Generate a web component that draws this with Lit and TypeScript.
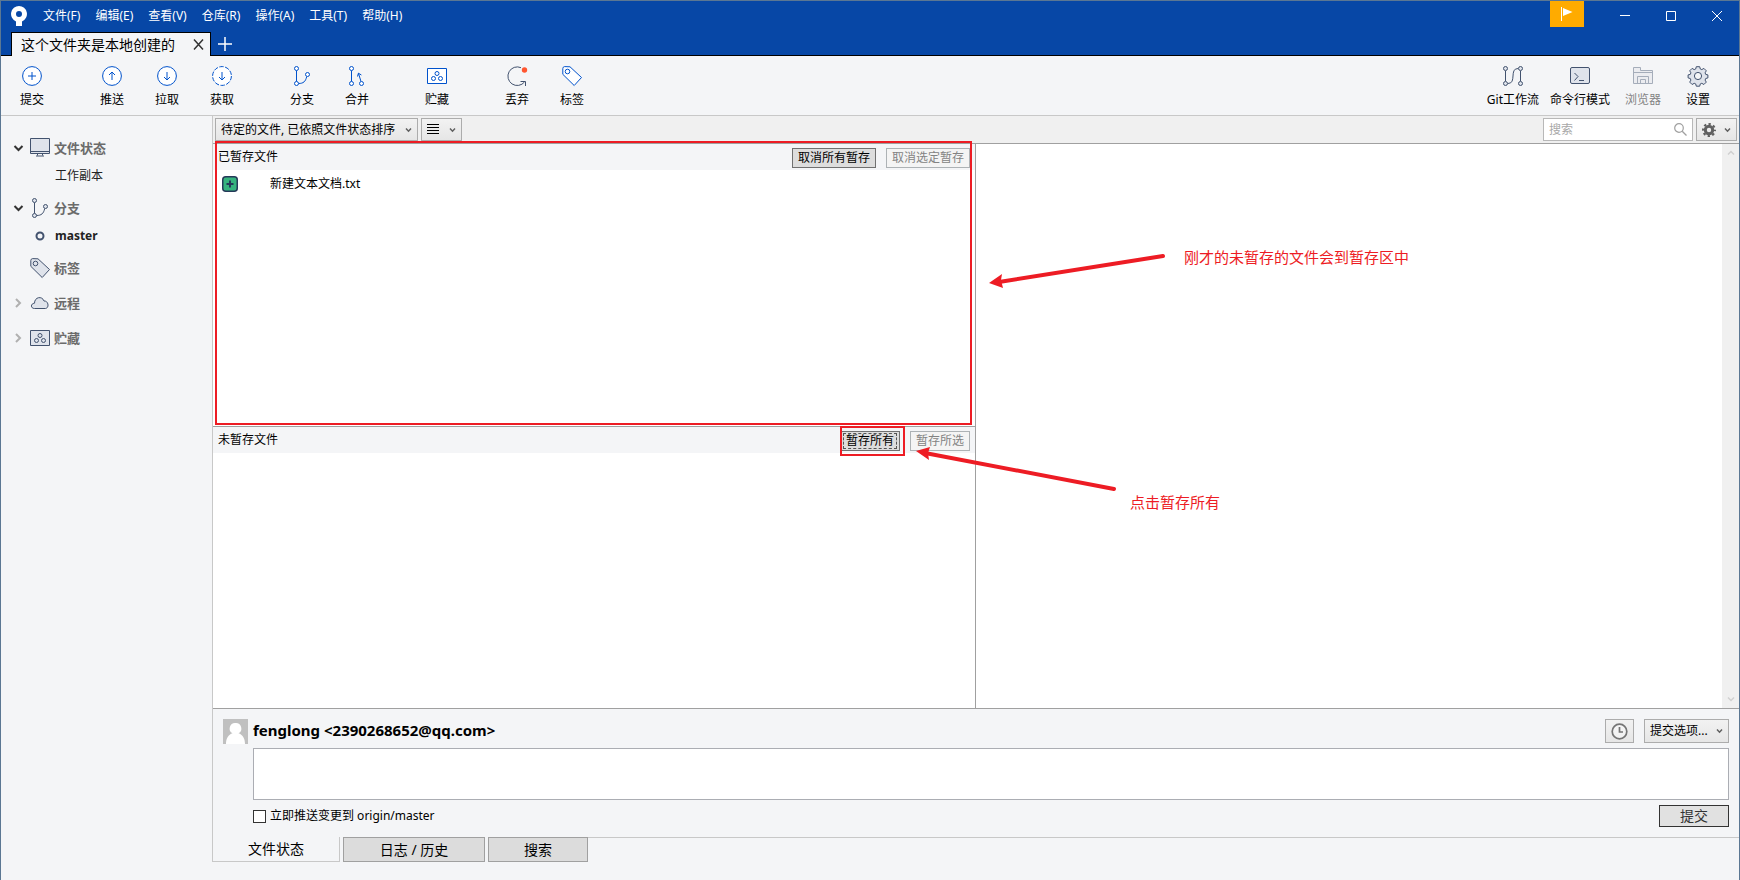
import { LitElement, html, css, svg, nothing } from "lit";
import { customElement, property } from "lit/decorators.js";

type Shape = ReturnType<typeof svg>;

const ICONS: Record<string, Shape> = {
  commit: svg`<circle cx="10" cy="10" r="9.4" fill="#fff"/><path d="M10 6v8M6 10h8"/>`,
  push: svg`<circle cx="10" cy="10" r="9.4" fill="#fff"/><path d="M10 14V6M7 9l3-3 3 3"/>`,
  pull: svg`<circle cx="10" cy="10" r="9.4" fill="#fff"/><path d="M10 6v8M7 11l3 3 3-3"/>`,
  fetch: svg`<circle cx="10" cy="10" r="9.4" fill="#fff" stroke-dasharray="4.4 1.5"/><path d="M10 6v8M7 11l3 3 3-3"/>`,
  branch: svg`<path d="M4.5 4.5v11M6.5 17.5c5 0 7-2 8.200-6.800"/><circle cx="4.500" cy="2.500" r="2" class="fill"/><circle cx="4.500" cy="17.500" r="2" class="fill"/><circle cx="15.500" cy="8.500" r="2" class="fill"/>`,
  merge: svg`<path d="M4.500 4.500v11M14 15.500l-2.500-8M10.500 10.500l.9-3.300 3 1.800"/><circle cx="4.500" cy="2.500" r="2" class="fill"/><circle cx="4.500" cy="17.500" r="2" class="fill"/><circle cx="14.500" cy="17.500" r="2" class="fill"/>`,
  stash: svg`<path class="fill" d="M.5 2.500h19v15H.5z"/><circle cx="10" cy="7.500" r="2"/><circle cx="6.500" cy="12.500" r="2"/><circle cx="13.500" cy="12.500" r="2"/>`,
  discard: svg`<path d="M14 1.700A9.300 9.300 0 1 0 17.500 16M13.500 15.500h5v4.500"/><circle cx="17.500" cy="4" r="2.700" fill="#ff5630" stroke="none"/>`,
  tag: svg`<path class="fill" d="M.8 2.500a2 2 0 0 1 1.700-1.900l5.500.2L19.500 11.500l-7.300 8L.8 8.300z"/><circle cx="5.500" cy="5.500" r="2.300"/>`,
  flow: svg`<path d="M2.500 5v10M17.500 5v10M5 17.500c9 0 1-15 10-15"/><circle cx="2.500" cy="2.500" r="2" class="fill"/><circle cx="2.500" cy="17.500" r="2" class="fill"/><circle cx="17.500" cy="2.500" r="2" class="fill"/><circle cx="17.500" cy="17.500" r="2" class="fill"/>`,
  terminal: svg`<rect class="fill" x=".5" y="1.500" width="19" height="16" rx="1.500"/><path d="M4.500 7l3.500 3.500-3.500 4M9 14.500h5"/>`,
  explorer: svg`<path class="fill" d="M.5 17.500v-16h7v3h12v13zM.5 6.500h19M4.500 17.500v-7h11v7M7.500 17.500v-4h5v4"/>`,
  gear: svg`<path class="fill" d="M8.300.7h3.400l.6 2.300 1.500.6 2.100-1.200 2.400 2.400-1.200 2 .6 1.600 2.200.5v3l-2.200.6-.6 1.600 1.200 2-2.400 2.400-2.100-1.200-1.500.6-.6 2.300H8.300l-.6-2.300-1.500-.6-2.100 1.200-2.400-2.400 1.200-2-.6-1.600-2.200-.6v-3l2.200-.5.6-1.600-1.200-2 2.400-2.400 2.100 1.200 1.500-.6z"/><circle cx="10" cy="10" r="3.600" fill="#f4f5f7"/>`,
  monitor: svg`<path class="fill" d="M.5.500h19v15H.5zM.5 13.500h19M7.500 15.500v2M12.500 15.500v2M6 18h8"/>`,
  cloud: svg`<path class="fill" d="M4.500 15.500C.4 15.500.4 10.500 4.500 10.200 4.500 4 12 2.500 14 8c4.500-.5 5.500 7 1.500 7.500z"/>`,
  head: svg`<circle cx="9" cy="10" r="3.500" stroke-width="2"/>`,
};

const icon = (name: string, tone: string) => html`
  <svg class="glyph ${tone}" width="20" height="20" viewBox="0 0 20 20" aria-hidden="true">${ICONS[name]}</svg>`;

const chevron = html`<svg class="chevron" width="7" height="6" viewBox="0 0 7 6" aria-hidden="true">
  <path d="M1 1.500l2.500 2.700L6 1.500" fill="none" stroke="#606060" stroke-width="1.500"/></svg>`;

const shared = css`
  * { box-sizing: border-box; }
  button, input, select, textarea { font: inherit; color: inherit; margin: 0; border-radius: 0; }
  .glyph { display: block; fill: none; stroke: #42526e; stroke-width: 1; flex: none; overflow: visible; }
  .glyph.blue { stroke: #0052cc; }
  .glyph.blue .fill { fill: #fff; }
  .glyph.slate .fill { fill: #dfe3eb; }
  .glyph.pale { stroke: #a5adba; }
  .glyph.pale .fill { fill: #ebecf0; }
`;

@customElement("title-bar")
class TitleBar extends LitElement {
  static styles = [shared, css`
    :host { display: block; background: #0747a6; color: #fff; border-bottom: 1px solid #000; }
    .top { display: flex; height: 31px; align-items: flex-start; }
    .logo { margin: 5px 16px 0 10px; }
    .menus { display: flex; gap: 15px; padding-top: 5px; flex: 1; }
    .menus button { border: 0; background: none; padding: 0; line-height: 20px; }
    .flag { width: 34px; height: 26px; border: 0; background: #ffab00; padding: 0; margin-right: 18px; }
    .flag svg, .win svg { display: block; margin: auto; }
    .win { width: 46px; height: 30px; border: 0; background: none; padding: 0; }
    .win.close { width: 45px; }
    .tabs { display: flex; height: 23px; padding-left: 10px; }
    .tab { display: flex; align-items: center; background: #f4f5f7; color: #000; font-size: 14px; line-height: 22px;
      border: 1px solid #000; border-bottom: 0; margin-bottom: -1px; padding: 0 6px 0 9px; gap: 18px; }
    .tab button, .add { border: 0; background: none; padding: 0; display: flex; align-items: center; }
    .add { padding: 0 7px; }
  `];
  render() {
    const menus = ["文件(F)", "编辑(E)", "查看(V)", "仓库(R)", "操作(A)", "工具(T)", "帮助(H)"];
    return html`
      <div class="top">
        <svg class="logo" width="16" height="21" viewBox="0 0 16 21" role="img" aria-label="Sourcetree">
          <path fill="#fff" fill-rule="evenodd" d="M8 0a8 8 0 0 1 3 15.400V20H5v-4.600A8 8 0 0 1 8 0zm0 5a3 3 0 1 0 0 6 3 3 0 0 0 0-6z"/>
        </svg>
        <nav class="menus">${menus.map((m) => html`<button>${m}</button>`)}</nav>
        <button class="flag" aria-label="通知">
          <svg width="12" height="14" viewBox="0 0 12 14"><path d="M.5 0v14" stroke="#fff"/><path d="M2 1l9.500 4L2 9z" fill="#fff"/></svg>
        </button>
        <button class="win" aria-label="最小化"><svg width="10" height="10"><path d="M0 4.500h10" stroke="#fff"/></svg></button>
        <button class="win" aria-label="最大化"><svg width="10" height="10"><path d="M.5.500h9v9h-9z" stroke="#fff" fill="none"/></svg></button>
        <button class="win close" aria-label="关闭"><svg width="10" height="10"><path d="M0 0l10 10M10 0L0 10" stroke="#fff"/></svg></button>
      </div>
      <div class="tabs">
        <div class="tab"><span>这个文件夹是本地创建的</span>
          <button aria-label="关闭标签页"><svg width="11" height="11"><path d="M1 .5l9 10M10 .5l-9 10" stroke="#333" stroke-width="1.500"/></svg></button>
        </div>
        <button class="add" aria-label="新标签页"><svg width="14" height="14"><path d="M0 7h14M7 0v14" stroke="#fff" stroke-width="1.500"/></svg></button>
      </div>`;
  }
}

@customElement("tool-bar")
class ToolBar extends LitElement {
  static styles = [shared, css`
    :host { display: flex; height: 60px; padding: 0 13px 0 4px; border-bottom: 1px solid #c8c8c8; }
    .group { display: flex; margin-right: 25px; }
    .right { display: flex; margin-left: auto; }
    button { min-width: 55px; padding: 10px 6px 0 5px; border: 0; background: none; display: flex; flex-direction: column;
      align-items: center; gap: 5px; line-height: 18px; color: #000; white-space: nowrap; }
    button:disabled { color: #838383; }
  `];
  render() {
    const groups = [
      [["commit", "提交"]],
      [["push", "推送"], ["pull", "拉取"], ["fetch", "获取"]],
      [["branch", "分支"], ["merge", "合并"]],
      [["stash", "贮藏"]],
      [["discard", "丢弃"], ["tag", "标签"]],
    ];
    const tools = [["flow", "Git工作流"], ["terminal", "命令行模式"], ["explorer", "浏览器"], ["gear", "设置"]];
    return html`
      ${groups.map((g) => html`<div class="group">${g.map(([i, t]) => html`
        <button>${icon(i, i === "discard" ? "slate" : "blue")}${t}</button>`)}</div>`)}
      <div class="right">${tools.map(([i, t]) => html`
        <button ?disabled=${i === "explorer"}>${icon(i, i === "explorer" ? "pale" : "slate")}${t}</button>`)}</div>`;
  }
}

interface Group { icon: string; label: string; state: "open" | "closed" | "none"; child?: string; }

@customElement("side-bar")
class SideBar extends LitElement {
  static styles = [shared, css`
    :host { display: block; padding-top: 14px; }
    .head { display: grid; grid-template-columns: 17px 20px 1fr; align-items: center; height: 35px; padding-left: 12px;
      font-size: 13px; font-weight: 700; color: #6b6b6b; }
    .head span { padding-left: 4px; }
    .child { display: grid; grid-template-columns: 24px 1fr; align-items: center; height: 21px; margin-bottom: 4px; padding-left: 30px; color: #222; }
    .bold { font-weight: 700; }
  `];
  render() {
    const groups: Group[] = [
      { icon: "monitor", label: "文件状态", state: "open", child: "工作副本" },
      { icon: "branch", label: "分支", state: "open", child: "master" },
      { icon: "tag", label: "标签", state: "none" },
      { icon: "cloud", label: "远程", state: "closed" },
      { icon: "stash", label: "贮藏", state: "closed" },
    ];
    return html`${groups.map((g) => html`
      <div class="head">
        <svg width="11" height="11" viewBox="0 0 11 11" fill="none" stroke-width="2" aria-hidden="true">
          ${g.state === "open" ? svg`<path d="M1.500 4l4 4 4-4" stroke="#333"/>` : g.state === "closed" ? svg`<path d="M3 2l4 4-4 4" stroke="#b0b0b0"/>` : nothing}
        </svg>
        ${icon(g.icon, "slate")}<span>${g.label}</span>
      </div>
      ${g.child ? html`<div class="child ${g.child === "master" ? "bold" : ""}">
        ${g.child === "master" ? icon("head", "slate") : html`<i></i>`}<span>${g.child}</span></div>` : nothing}`)}`;
  }
}

@customElement("file-pane")
class FilePane extends LitElement {
  @property() heading = "";
  @property() all = "";
  @property() selected = "";
  @property({ type: Array }) files: string[] = [];
  @property({ type: Boolean }) focusall = false;
  static styles = [shared, css`
    :host { display: block; background: #fff; min-height: 0; }
    header { display: flex; align-items: center; gap: 10px; height: 26px; background: #f4f5f7; padding: 2px 5px 0; color: #000; }
    h2 { font: inherit; line-height: 22px; margin: 0; flex: 1; align-self: flex-start; }
    button { height: 20px; line-height: 16px; padding: 0 5px; border: 1px solid #707070; background: #ddd; color: #000; }
    button:disabled { border-color: #adb2b5; background: #f4f4f4; color: #838383; }
    .focus span { display: block; margin: 0 -3px; padding: 0 3px; outline: 1px dashed #555; outline-offset: -1px; }
    ul { list-style: none; margin: 0; padding: 0; }
    li { display: flex; align-items: center; height: 28px; padding-left: 9px; gap: 32px; color: #000; }
    li svg { display: block; }
  `];
  render() {
    return html`
      <header><h2>${this.heading}</h2>
        <button class=${this.focusall ? "focus" : ""}><span>${this.all}</span></button>
        <button disabled>${this.selected}</button></header>
      <ul>${this.files.map((f) => html`<li>
        <svg width="16" height="16" viewBox="0 0 16 16" role="img" aria-label="新增"><rect x=".75" y=".75" width="14.500" height="14.500" rx="3" fill="#36b37e" stroke="#253858" stroke-width="1.500"/><path d="M8 4.500v7M4.500 8h7" stroke="#253858" stroke-width="2"/></svg>
        <span>${f}</span></li>`)}</ul>`;
  }
}

@customElement("commit-form")
class CommitForm extends LitElement {
  static styles = [shared, css`
    :host { display: grid; grid-template-columns: 25px 1fr; column-gap: 5px; padding: 10px 10px 10px 10px; border-top: 1px solid #a0a0a0; }
    .row { display: flex; gap: 10px; color: #000; }
    .who { height: 25px; margin-bottom: 4px; }
    strong { font-size: 15px; line-height: 22px; flex: 1; }
    .clock { width: 29px; height: 24px; padding: 0; border: 1px solid #acacac; background: linear-gradient(#f2f2f2, #e6e6e6); }
    .clock svg { display: block; margin: auto; }
    .drop { display: grid; height: 24px; }
    select { grid-area: 1 / 1; appearance: none; height: 24px; width: 85px; border: 1px solid #acacac; padding: 0 0 0 5px;
      background: linear-gradient(#f2f2f2, #e6e6e6); color: #000; }
    .chevron { grid-area: 1 / 1; place-self: center end; margin-right: 6px; pointer-events: none; }
    textarea { display: block; grid-column: 2; width: 100%; height: 52px; border: 1px solid #abadb3; background: #fff; resize: none; }
    .foot { grid-column: 2; justify-content: space-between; padding-top: 5px; }
    label { display: flex; align-items: center; gap: 4px; height: 22px; }
    input { appearance: none; width: 13px; height: 13px; border: 1px solid #333; background: #fff; }
    .submit { width: 70px; height: 22px; border: 1px solid #333; background: #e1e1e1; color: #333; font-size: 14px; line-height: 18px; padding: 0; }
  `];
  render() {
    return html`
      <svg width="25" height="25" viewBox="0 0 25 25" aria-hidden="true"><path fill="#c0c0c0" d="M0 0h25v25H0z"/>
        <path fill="#fff" d="M12.500 4a5.500 5.500 0 0 1 3 10.300c4 1.200 6.500 5 6.500 10.700H3c0-5.700 2.500-9.500 6.500-10.700A5.500 5.500 0 0 1 12.500 4z"/></svg>
      <div class="row who">
        <strong>fenglong &lt;2390268652@qq.com&gt;</strong>
        <button class="clock" aria-label="提交信息历史"><svg width="17" height="17"><circle cx="8.500" cy="8.500" r="7.300" fill="#fff" fill-opacity=".4" stroke="#757575" stroke-width="1.700"/><path d="M8.500 4v5H12" fill="none" stroke="#757575" stroke-width="1.700"/></svg></button>
        <div class="drop"><select aria-label="提交选项"><option>提交选项...</option></select>${chevron}</div>
      </div>
      <textarea aria-label="提交信息"></textarea>
      <div class="row foot">
        <label><input type="checkbox"><span>立即推送变更到 origin/master</span></label>
        <button class="submit">提交</button>
      </div>`;
  }
}

@customElement("app-root")
class AppRoot extends LitElement {
  static styles = [shared, css`
    :host { box-sizing: border-box; display: flex; flex-direction: column; min-height: 100vh; background: #f4f5f7; color: #000;
      border: 1px solid #5b7793; border-bottom: 0; font: 12px/18px "Noto Sans", "Noto Sans CJK SC", sans-serif; }
    .body { flex: 1; display: grid; grid-template-columns: 211px 1fr; padding-bottom: 18px; }
    .main { display: flex; flex-direction: column; border-left: 1px solid #c8c8c8; min-width: 0; }
    .filters { display: flex; gap: 3px; height: 28px; padding: 2px; background: #f0f0f0; border-bottom: 1px solid #a0a0a0; }
    .drop { display: grid; }
    .drop select { grid-area: 1 / 1; appearance: none; height: 23px; padding: 0 21px 0 5px; border: 1px solid #acacac;
      background: linear-gradient(#f2f2f2, #e6e6e6); color: #000; }
    .drop .chevron { grid-area: 1 / 1; place-self: center end; margin-right: 6px; pointer-events: none; }
    .pick { display: flex; align-items: center; justify-content: space-between; width: 41px; height: 23px; padding: 0 5px;
      border: 1px solid #acacac; background: linear-gradient(#f2f2f2, #e6e6e6); }
    .search { display: flex; align-items: center; width: 150px; height: 23px; margin-left: auto; padding: 0 5px; border: 1px solid #b8b8b8; background: #fff; }
    .search input { flex: 1; min-width: 0; border: 0; padding: 0; background: none; outline: 0; }
    .search input::placeholder { color: #a8a8a8; opacity: 1; }
    .panes { flex: 1; display: grid; grid-template-columns: 763px 1fr; position: relative; background: #fff; }
    .lists { display: grid; grid-template-rows: 1fr 1fr; border-right: 1px solid #a0a0a0; }
    .lists file-pane + file-pane { border-top: 1px solid #a0a0a0; }
    .diff { display: flex; justify-content: flex-end; }
    .scroll { display: flex; flex-direction: column; justify-content: space-between; align-items: center; width: 17px; padding: 6px 0; background: #f0f0f0; }
    .mark { position: absolute; border: 2px solid #ed1c24; pointer-events: none; }
    .staged { left: 2px; top: -3px; width: 757px; height: 284px; }
    .all { left: 627px; top: 282px; width: 65px; height: 30px; }
    .arrows { position: absolute; left: 0; top: 0; pointer-events: none; }
    .note { position: absolute; margin: 0; color: #ed1c24; font-size: 15px; line-height: 20px; white-space: nowrap; }
    .first { left: 971px; top: 103px; }
    .second { left: 917px; top: 348px; }
    .views { display: flex; height: 25px; margin-left: -1px; }
    .views button { border: 1px solid #a0a0a0; background: #dcdcdc; font-size: 14px; line-height: 20px; padding: 0; margin-left: 3px; color: #000; }
    .views .on { width: 128px; margin-left: 0; border: 1px solid #c8c8c8; border-top: 0; background: none; }
    .views .log { width: 142px; }
    .views .find { width: 100px; }
    .rest { flex: 1; border-top: 1px solid #c8c8c8; }
  `];
  render() {
    return html`
      <title-bar></title-bar>
      <tool-bar></tool-bar>
      <div class="body">
        <side-bar></side-bar>
        <main class="main">
          <div class="filters">
            <div class="drop"><select aria-label="排序"><option>待定的文件, 已依照文件状态排序</option></select>${chevron}</div>
            <button class="pick" aria-label="视图"><svg width="12" height="11"><path d="M0 .5h12M0 3.500h12M0 6.500h12M0 9.500h12" stroke="#000"/></svg>${chevron}</button>
            <label class="search"><input type="text" placeholder="搜索" aria-label="搜索">
              <svg width="13" height="13"><circle cx="5" cy="5" r="4.300" fill="none" stroke="#a0a0a0" stroke-width="1.200"/><path d="M8.200 8.200l4.300 4.300" stroke="#a0a0a0" stroke-width="1.300"/></svg></label>
            <button class="pick" aria-label="选项"><svg width="14" height="14" viewBox="0 0 14 14"><circle cx="7" cy="7" r="3.700" fill="none" stroke="#606060" stroke-width="3"/><circle cx="7" cy="7" r="6" fill="none" stroke="#606060" stroke-width="2" stroke-dasharray="2.350 2.362" stroke-dashoffset="1.200"/></svg>${chevron}</button>
          </div>
          <div class="panes">
            <div class="lists">
              <file-pane heading="已暂存文件" all="取消所有暂存" selected="取消选定暂存" .files=${["新建文本文档.txt"]}></file-pane>
              <file-pane heading="未暂存文件" all="暂存所有" selected="暂存所选" focusall></file-pane>
            </div>
            <div class="diff"><div class="scroll">
              <svg width="8" height="6"><path d="M1 4.500l3-3 3 3" fill="none" stroke="#d0d0d0" stroke-width="1.500"/></svg>
              <svg width="8" height="6"><path d="M1 1.500l3 3 3-3" fill="none" stroke="#d0d0d0" stroke-width="1.500"/></svg>
            </div></div>
            <div class="mark staged"></div>
            <div class="mark all"></div>
            <svg class="arrows" width="1000" height="400" aria-hidden="true" fill="#ed1c24" stroke="#ed1c24" stroke-width="4" stroke-linecap="round">
              <path d="M786 138l164-26"/><path stroke="none" d="M776 139l13-9-1 6 2 8z"/>
              <path d="M712 309l189 36"/><path stroke="none" d="M703 307l14-4-2 6 1 7z"/>
            </svg>
            <p class="note first">刚才的未暂存的文件会到暂存区中</p>
            <p class="note second">点击暂存所有</p>
          </div>
          <commit-form></commit-form>
          <div class="views"><button class="on">文件状态</button><button class="log">日志 / 历史</button><button class="find">搜索</button><div class="rest"></div></div>
        </main>
      </div>`;
  }
}
